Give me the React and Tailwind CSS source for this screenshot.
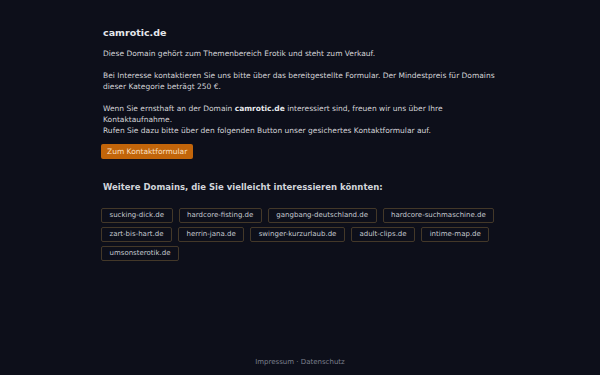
const domains = [
  'sucking-dick.de',
  'hardcore-fisting.de',
  'gangbang-deutschland.de',
  'hardcore-suchmaschine.de',
  'zart-bis-hart.de',
  'herrin-jana.de',
  'swinger-kurzurlaub.de',
  'adult-clips.de',
  'intime-map.de',
  'umsonsterotik.de',
]

export default function App() {
  return (
    <div
      className="min-h-[375px] bg-[#0d0f1a] text-[#d4d4d8] flex flex-col"
      style={{ fontFamily: '"DejaVu Sans", Verdana, sans-serif' }}
    >
      <main className="flex-1 w-[400px] mx-auto pt-[26px] pl-[3px]">
        <h1 className="text-[9.5px] font-bold text-[#e5e7eb] leading-[13px] mb-[9px]">camrotic.de</h1>
        <div className="text-[7.5px] leading-[11px] space-y-[11px]">
          <p>Diese Domain gehört zum Themenbereich Erotik und steht zum Verkauf.</p>
          <p>
            Bei Interesse kontaktieren Sie uns bitte über das bereitgestellte Formular. Der Mindestpreis für Domains
            dieser Kategorie beträgt 250 €.
          </p>
          <p>
            Wenn Sie ernsthaft an der Domain <strong className="text-[#e5e7eb]">camrotic.de</strong> interessiert sind,
            freuen wir uns über Ihre Kontaktaufnahme.
            <br />
            Rufen Sie dazu bitte über den folgenden Button unser gesichertes Kontaktformular auf.
          </p>
        </div>
        <button className="mt-[8px] -ml-[2px] h-[15px] px-[6px] bg-[#c2650a] text-[#fbe0c4] text-[7.5px] rounded-[2px]">
          Zum Kontaktformular
        </button>
        <h2 className="mt-[20px] text-[8.5px] font-bold text-[#d1d5db] leading-[12px]">
          Weitere Domains, die Sie vielleicht interessieren könnten:
        </h2>
        <div className="mt-[15px] -ml-[2px] flex flex-wrap gap-x-[6px] gap-y-[4px] w-[400px]">
          {domains.map((d) => (
            <a
              key={d}
              href="#"
              className="h-[15px] px-[7.5px] flex items-center border border-[#433829] rounded-[2px] text-[7px] text-[#c4c8cf]"
            >
              {d}
            </a>
          ))}
        </div>
      </main>
      <footer className="h-[18px] flex justify-center items-start text-[7px] text-[#7b7f8c]">
        <span>Impressum · Datenschutz</span>
      </footer>
    </div>
  )
}
